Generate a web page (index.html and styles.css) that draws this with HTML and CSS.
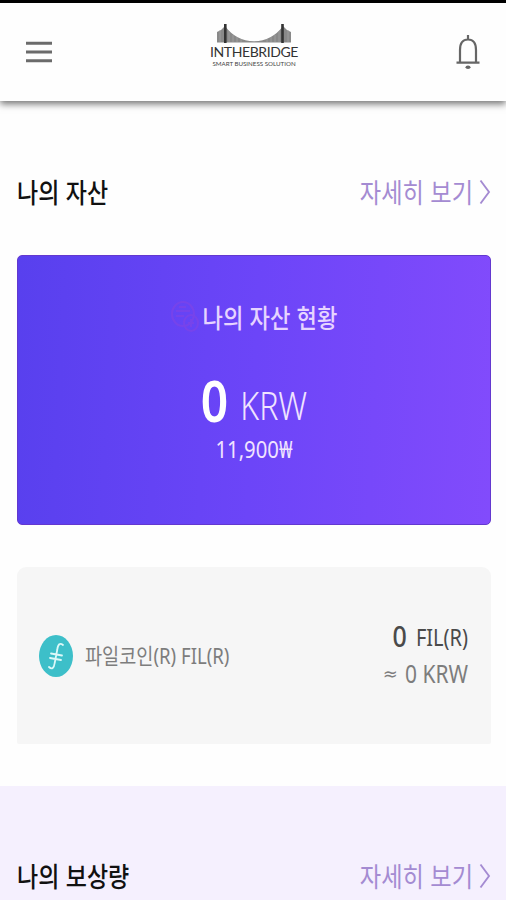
FILE: index.html
```html
<!DOCTYPE html>
<html lang="ko">
<head>
<meta charset="utf-8">
<meta name="viewport" content="width=device-width, initial-scale=1">
<title>INTHEBRIDGE</title>
<link rel="stylesheet" href="styles.css">
</head>
<body>
<header class="topbar">
  <svg class="menu" viewBox="0 0 28 24" fill="none" stroke="#6b6b6b" stroke-width="3"><path d="M1 3.2h26M1 12h26M1 20.8h26"/></svg>
  <div class="logo">
    <svg class="bridge" viewBox="0 0 76 19">
      <path d="M1 8Q6 6 9 2Q20 17 38 17.2Q56 17 67 2Q70 6 75 8V18.5H1Z" fill="#898989"/>
      <path d="M4 6v12M13 7v11M17 11v7M21 13v5M25 15v3M51 15v3M55 13v5M59 11v7M63 7v11M72 6v12" stroke="#a4a4a4" stroke-width=".8"/>
      <path d="M9.3 0v19M66.5 0v19" stroke="#333" stroke-width="2.6"/>
    </svg>
    <div class="brand">INTHEBRIDGE</div>
    <div class="tagline">SMART BUSINESS SOLUTION</div>
  </div>
  <svg class="bell" viewBox="0 0 26 36" fill="none" stroke="#666" stroke-width="2.2"><path d="M5 28V16C5 9 8 5.500 13 5.500S21 9 21 16V28M1.500 28.600h23M13 1v4"/><ellipse cx="13" cy="33.300" rx="2.500" ry="1.700" fill="#666" stroke="none"/></svg>
</header>
<main>
  <section class="assets">
    <div class="heading">
      <h2 class="tall">나의 자산</h2>
      <a class="more"><span class="tall">자세히 보기</span><svg class="chevron" viewBox="0 0 12 26"><path d="M1.500 1.500L10 13L1.500 24.500" fill="none" stroke="currentColor" stroke-width="1.900"/></svg></a>
    </div>
    <div class="balance">
      <div class="caption">
        <svg class="coins" viewBox="0 0 28 32" fill="none" stroke="#8044e6" stroke-width="2"><ellipse cx="12" cy="13" rx="11" ry="12"/><path d="M5 10h14M5 15h8M8 6h7"/><ellipse cx="20" cy="22" rx="7" ry="8"/><path d="M17 22h6M20 18v8"/></svg>
        <span class="tall">나의 자산 현황</span>
      </div>
      <div class="amount"><strong class="tall">0</strong><span class="tall">KRW</span></div>
      <div class="rate"><span class="tall">11,900₩</span></div>
    </div>
    <div class="coin">
      <svg class="filecoin" viewBox="0 0 34 42"><ellipse cx="17" cy="21" rx="17" ry="21" fill="#3dbfc9"/><path d="M24 10C21 7.500 19 9 18.200 15L15.700 28C15 33 13 35 10 32M12 18.500L23 20.500M11 23L22 25" fill="none" stroke="#dcf8f8" stroke-width="1.800" stroke-linecap="round"/></svg>
      <div class="coin-name"><span class="tall">파일코인(R) FIL(R)</span></div>
      <div class="holding">
        <div class="quantity"><b class="tall">0</b><span class="tall">FIL(R)</span></div>
        <div class="value"><span class="approx">≈</span><span class="tall">0 KRW</span></div>
      </div>
    </div>
  </section>
  <section class="rewards">
    <div class="heading">
      <h2 class="tall">나의 보상량</h2>
      <a class="more"><span class="tall">자세히 보기</span><svg class="chevron" viewBox="0 0 12 26"><path d="M1.500 1.500L10 13L1.500 24.500" fill="none" stroke="currentColor" stroke-width="1.900"/></svg></a>
    </div>
  </section>
</main>
</body>
</html>
```
FILE: styles.css
```css
* { box-sizing: border-box; }
html, body { height: 100%; margin: 0; overflow: hidden; }
body { background: #fefefe; font-family: "Noto Sans", "Noto Sans CJK KR", sans-serif; color: #111; }
.tall { display: inline-block; white-space: nowrap; transform: scaleY(1.17); }
svg { display: block; flex: none; }

.topbar { position: relative; z-index: 1; display: flex; align-items: flex-start; justify-content: space-between; height: 101px; padding: 0 25px; border-top: 3px solid #000; background: #fefefe; box-shadow: 0 3px 7px rgba(0,0,0,.55); }
.menu { width: 28px; height: 24px; margin-top: 37px; }
.logo { width: 90px; margin-top: 21px; display: flex; flex-direction: column; align-items: center; }
.bridge { width: 76px; height: 19px; }
.brand { height: 17px; line-height: 17px; font-family: Lato, sans-serif; font-size: 14px; letter-spacing: -.4px; color: #333; }
.tagline { height: 8px; line-height: 8px; font-family: Lato, sans-serif; font-size: 6.200px; color: #444; }
.bell { width: 26px; height: 36px; margin-top: 31px; }

.assets { height: 685px; padding: 64px 15px 0 17px; }
.heading { display: flex; justify-content: space-between; align-items: center; height: 54px; }
h2 { margin: 0; font-family: "Noto Sans CJK KR", sans-serif; font-size: 23px; font-weight: 500; line-height: 50px; padding-bottom: 2px; }
.more { display: flex; align-items: center; gap: 6px; font-family: "Noto Sans CJK KR", sans-serif; font-size: 23.200px; font-weight: 400; line-height: 50px; color: #a48bd2; }
.more .tall { padding-bottom: 2px; }
.chevron { width: 12px; height: 26px; }

.balance { height: 270px; margin-top: 36px; padding-top: 43px; border: 1px solid #6338cf; border-radius: 5px; background: linear-gradient(93deg, #5840ee, #6c45f8 50%, #824bfc); color: #f0e3ff; }
.caption { display: flex; justify-content: center; align-items: center; gap: 4px; height: 36px; font-family: "Noto Sans CJK KR", sans-serif; font-size: 22.200px; font-weight: 500; line-height: 32px; color: #e6d4ff; }
.caption .tall { padding-bottom: 2px; }
.coins { width: 28px; height: 32px; opacity: .65; }
.amount { display: flex; justify-content: center; align-items: baseline; gap: 12px; height: 62px; margin-top: 34px; line-height: 62px; font-size: 32px; font-weight: 300; }
.amount strong { font-size: 48px; font-weight: 600; color: #fff; transform: scaleY(1.22); }
.amount span { transform: scaleY(1.2); }
.rate { height: 30px; margin-top: 3px; line-height: 30px; text-align: center; font-size: 20.300px; }
.rate .tall { transform: scaleY(1.15); }

.coin { display: flex; align-items: center; height: 177px; margin-top: 42px; padding: 0 23px 0 22px; border-radius: 9px 9px 2px 2px; background: #f6f6f6; color: #7d7d7d; }
.filecoin { width: 34px; height: 42px; }
.coin-name { margin-left: 12px; font-size: 18.600px; line-height: 30px; }
.holding { margin-left: auto; padding-bottom: 2px; }
.quantity { display: flex; justify-content: flex-end; align-items: baseline; gap: 9px; height: 39px; line-height: 39px; font-size: 20px; color: #4a4a4a; }
.quantity b { font-size: 25px; font-weight: 500; }
.value { display: flex; justify-content: flex-end; gap: 7px; height: 38px; line-height: 38px; font-size: 21px; }
.value .tall { transform: scaleY(1.17); }
.approx { font-family: "DejaVu Sans", sans-serif; font-size: 18px; }

.rewards { height: 114px; padding: 63px 15px 0 17px; background: #f5f0fe; overflow: hidden; }
.rewards .heading { height: 54px; }
```
